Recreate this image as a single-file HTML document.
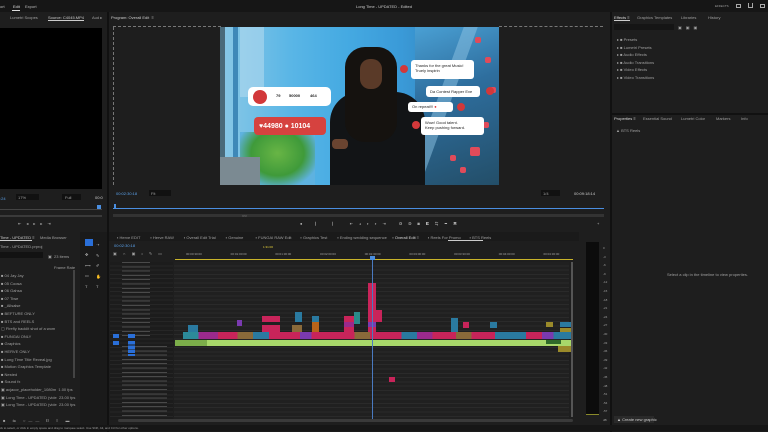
<!DOCTYPE html>
<html><head><meta charset="utf-8"><style>
*{margin:0;padding:0;box-sizing:border-box}
body{width:768px;height:431px;overflow:hidden;background:#1b1b1b;font-family:"Liberation Sans",sans-serif;font-size:4px;color:#9a9a9a;position:relative}
.a{position:absolute}
.t{position:absolute;white-space:nowrap;font-size:4px;color:#a0a0a0}
.card{position:absolute;background:#fff;border-radius:3px;color:#222;font-size:4px;line-height:5px;padding:1px 4px}
.dot{position:absolute;width:8px;height:8px;border-radius:50%;background:#d2383a}
.ic{position:absolute;width:6px;height:6px;background:#e04b5a;border-radius:2px}
</style></head><body>
<div class="a" style="left:0;top:0;width:768px;height:12px;background:#161616"></div>
<div class="t" style="left:0;top:4px;color:#bbb">ort</div>
<div class="t" style="left:13px;top:4px;color:#ddd">Edit</div>
<div class="t" style="left:25px;top:4px;color:#bbb">Export</div>
<div class="a" style="left:12px;top:10px;width:8px;height:1px;background:#ddd"></div>
<div class="t" style="left:356px;top:4px;color:#ccc">Long Time - UPDATED - Edited</div>
<div class="t" style="left:715px;top:4px;font-size:3px">EFFECTS</div>
<div class="a" style="left:736px;top:4px;width:5px;height:4px;border:1px solid #aaa"></div>
<div class="a" style="left:748px;top:3px;width:5px;height:5px;border:1px solid #aaa;border-top:none"></div>
<div class="a" style="left:760px;top:4px;width:5px;height:4px;border:1px solid #aaa"></div>

<div class="a" style="left:0;top:12px;width:107px;height:220px;background:#1e1e1e"></div>
<div class="t" style="left:10px;top:15px">Lumetri Scopes</div>
<div class="t" style="left:48px;top:15px;color:#ccc">Source: C4045.MP4</div>
<div class="a" style="left:48px;top:20px;width:36px;height:1px;background:#ccc"></div>
<div class="t" style="left:92px;top:15px">Aud ▸</div>
<div class="a" style="left:0;top:28px;width:102px;height:161px;background:#000"></div>
<div class="t" style="left:0;top:196px;color:#5aa0e8">:24</div>
<div class="a" style="left:16px;top:194px;width:23px;height:6px;background:#111"></div>
<div class="t" style="left:18px;top:195px">17%</div>
<div class="a" style="left:62px;top:194px;width:19px;height:6px;background:#111"></div>
<div class="t" style="left:65px;top:195px">Full</div>
<div class="t" style="left:95px;top:195px;color:#ccc">00:0</div>
<div class="a" style="left:0;top:209px;width:102px;height:1px;background:#444"></div>
<div class="a" style="left:97px;top:205px;width:4px;height:4px;background:#4a8ee0"></div>
<div class="a" style="left:0;top:215px;width:102px;height:2px;background:#3a3a3a"></div>
<div class="t" style="left:18px;top:221px;color:#bbb;letter-spacing:5px">⇤◂▸▸⇥</div>
<div class="a" style="left:107px;top:12px;width:2px;height:420px;background:#111"></div>

<div class="a" style="left:109px;top:12px;width:501px;height:220px;background:#1e1e1e"></div>
<div class="t" style="left:111px;top:15px;color:#ccc">Program: Overall Edit &nbsp;≡</div>
<div class="a" style="left:113px;top:22px;width:108px;height:5px;border-bottom:1px dashed #777"></div>
<div class="a" style="left:499px;top:22px;width:104px;height:5px;border-bottom:1px dashed #777"></div>
<div class="a" style="left:109px;top:27px;width:5px;height:158px;border-right:1px dashed #777"></div>

<div class="a" style="left:220px;top:27px;width:279px;height:158px;overflow:hidden;background:linear-gradient(90deg,#8ac8e6 0%,#5ab6e6 25%,#45aae2 45%,#3a9ad8 65%,#2d70a0 100%)">
  <div class="a" style="left:0;top:0;width:5px;height:158px;background:#4a6a7a"></div>
  <div class="a" style="left:13px;top:0;width:5px;height:158px;background:#3e88b8"></div>
  <div class="a" style="left:20px;top:0;width:24px;height:70px;background:#b0d8ee;opacity:.6"></div>
  <div class="a" style="left:20px;top:105px;width:75px;height:53px;background:radial-gradient(ellipse at 50% 40%,#68b545 0%,#3f9a3a 50%,#5eb2e0 80%)"></div>
  <div class="a" style="left:0;top:130px;width:40px;height:28px;background:#7b8a92"></div>
  <div class="a" style="left:195px;top:0;width:84px;height:158px;background:linear-gradient(160deg,#4aa0d4 0%,#2e6e9e 40%,#234e68 100%)"></div>
  <div class="a" style="left:215px;top:0;width:14px;height:158px;background:#8ec4e4;opacity:.5;transform:skewX(-20deg)"></div>
  <div class="a" style="left:110px;top:65px;width:95px;height:93px;background:#121416;border-radius:30px 30px 0 0"></div>
  <div class="a" style="left:125px;top:20px;width:52px;height:95px;background:#15120f;border-radius:20px"></div>
  <div class="a" style="left:140px;top:32px;width:22px;height:30px;background:#5a3a28;border-radius:10px"></div>
  <div class="a" style="left:112px;top:112px;width:16px;height:10px;background:#6a4430;border-radius:4px"></div>
  <div class="ic" style="left:250px;top:120px;width:10px;height:9px"></div>
  <div class="ic" style="left:263px;top:95px"></div>
  <div class="ic" style="left:240px;top:140px"></div>
  <div class="ic" style="left:265px;top:30px"></div>
  <div class="ic" style="left:230px;top:128px"></div>
  <div class="ic" style="left:255px;top:10px"></div>
  <div class="ic" style="left:270px;top:60px"></div>
  <div class="ic" style="left:244px;top:100px"></div>
</div>
<div class="a" style="left:248px;top:87px;width:83px;height:19px;background:#fff;border-radius:5px"></div>
<div class="dot" style="left:253px;top:90px;width:14px;height:14px"></div>
<div class="t" style="left:276px;top:93px;color:#222;font-weight:bold">79</div>
<div class="t" style="left:289px;top:93px;color:#222;font-weight:bold">50000</div>
<div class="t" style="left:310px;top:93px;color:#222;font-weight:bold">464</div>
<div class="a" style="left:254px;top:117px;width:72px;height:18px;background:#d6423f;border-radius:4px"></div>
<div class="t" style="left:259px;top:123px;color:#fff;font-weight:bold;font-size:7px">♥44980 ● 10104</div>
<div class="card" style="left:411px;top:60px;width:63px;height:19px;padding-top:3px">Thanks for the great Music!<br>Truely inspirin</div>
<div class="card" style="left:426px;top:86px;width:54px;height:11px;padding-top:3px">Da Contest Rapper Eve</div>
<div class="card" style="left:408px;top:102px;width:45px;height:10px;padding-top:2px">On repeat!!! <span style="color:#d33">●</span></div>
<div class="card" style="left:421px;top:117px;width:63px;height:18px;padding-top:3px">Wow! Good talent.<br>Keep pushing forward.</div>
<div class="dot" style="left:400px;top:65px"></div>
<div class="dot" style="left:486px;top:87px"></div>
<div class="dot" style="left:457px;top:103px"></div>
<div class="dot" style="left:412px;top:121px"></div>

<div class="t" style="left:116px;top:191px;color:#5aa0e8">00:02:30:18</div>
<div class="a" style="left:149px;top:190px;width:22px;height:6px;background:#111"></div>
<div class="t" style="left:151px;top:191px">Fit</div>
<div class="a" style="left:541px;top:190px;width:19px;height:6px;background:#111"></div>
<div class="t" style="left:543px;top:191px">1/4</div>
<div class="t" style="left:574px;top:191px;color:#ccc">00:09:18:14</div>
<div class="a" style="left:113px;top:208px;width:491px;height:1px;background:#4a8ee0"></div>
<div class="a" style="left:114px;top:204px;width:2px;height:4px;background:#4a8ee0"></div>
<div class="a" style="left:113px;top:214px;width:491px;height:3px;background:#333"></div>
<div class="t" style="left:242px;top:213px">○○</div>
<div class="t" style="left:300px;top:221px;color:#bbb;letter-spacing:6px">● ⎸ ⎸ ⇤◂▸▸⇥ ⚇⚇◙◧⇆▭▣</div>
<div class="t" style="left:597px;top:221px;color:#bbb">+</div>

<div class="a" style="left:610px;top:12px;width:2px;height:420px;background:#111"></div>
<div class="a" style="left:612px;top:12px;width:156px;height:101px;background:#1e1e1e"></div>
<div class="t" style="left:614px;top:15px;color:#ddd">Effects ≡</div>
<div class="a" style="left:614px;top:20px;width:16px;height:1px;background:#ccc"></div>
<div class="t" style="left:637px;top:15px">Graphics Templates</div>
<div class="t" style="left:681px;top:15px">Libraries</div>
<div class="t" style="left:708px;top:15px">History</div>
<div class="a" style="left:614px;top:24px;width:60px;height:6px;background:#151515"></div>
<div class="t" style="left:678px;top:25px;letter-spacing:4px">▣▣▣</div>
<div class="t" style="left:617px;top:36px;line-height:7.6px">▸ ■ Presets<br>▸ ■ Lumetri Presets<br>▸ ■ Audio Effects<br>▸ ■ Audio Transitions<br>▸ ■ Video Effects<br>▸ ■ Video Transitions</div>
<div class="a" style="left:612px;top:113px;width:156px;height:2px;background:#111"></div>
<div class="a" style="left:612px;top:115px;width:156px;height:310px;background:#1e1e1e"></div>
<div class="t" style="left:614px;top:116px;color:#ddd">Properties ≡</div>
<div class="t" style="left:643px;top:116px">Essential Sound</div>
<div class="t" style="left:681px;top:116px">Lumetri Color</div>
<div class="t" style="left:716px;top:116px">Markers</div>
<div class="t" style="left:741px;top:116px">Info</div>
<div class="t" style="left:616px;top:128px">▲ BTS Reels</div>
<div class="t" style="left:667px;top:272px">Select a clip in the timeline to view properties.</div>
<div class="a" style="left:614px;top:416px;width:40px;height:7px;background:#2a2a2a"></div>
<div class="t" style="left:617px;top:417px;color:#ccc">▲ Create new graphic</div>

<div class="a" style="left:0;top:232px;width:80px;height:193px;background:#1e1e1e"></div>
<div class="t" style="left:0;top:235px;color:#ccc">Time - UPDATED ≡</div>
<div class="a" style="left:0;top:240px;width:32px;height:1px;background:#ccc"></div>
<div class="t" style="left:40px;top:235px">Media Browser</div>
<div class="t" style="left:0;top:244px">Time - UPDATED.prproj</div>
<div class="a" style="left:0;top:252px;width:43px;height:6px;background:#121212"></div>
<div class="t" style="left:48px;top:254px">▣ &nbsp;23 items</div>
<div class="t" style="left:54px;top:265px">Frame Rate</div>
<div class="a" style="left:73px;top:270px;width:2px;height:108px;background:#444"></div>
<div class="t" style="left:1px;top:272px;line-height:7.6px">■ 04 Jay Jay<br>■ 05 Coosa<br>■ 06 Gahsa<br>■ 07 Tiwe<br>■ _Allsalse<br>■ BEFTURE ONLY<br>■ BTS and REELS<br>▢ Firefly backlit shot of a wom<br>■ FUNGAI ONLY<br>■ Graphics<br>■ HERVE ONLY<br>■ Long Time Title Reveal.jpg<br>■ Motion Graphics Template<br>■ Nested<br>■ Sound fx<br>▣ acjacor_placeholder_1080m &nbsp;1.00 fps<br>▣ Long Time - UPDATED (vide &nbsp;23.00 fps<br>▣ Long Time - UPDATED (vide &nbsp;23.00 fps</div>
<div class="t" style="left:3px;top:418px;letter-spacing:3px">■ ⇋ ○—— ⌷ ≡ ▬</div>

<div class="a" style="left:80px;top:232px;width:27px;height:193px;background:#1a1a1a"></div>
<div class="a" style="left:85px;top:239px;width:8px;height:7px;background:#2a6fd8"></div>
<div class="t" style="left:96px;top:240px;line-height:10.5px;color:#bbb">⇢<br>✎<br>✐<br>✋<br>T</div>
<div class="t" style="left:85px;top:250px;line-height:10.5px;color:#bbb">✥<br>⟷<br>▭<br>T</div>

<div class="a" style="left:109px;top:232px;width:470px;height:193px;background:#1e1e1e"></div>
<div class="a" style="left:109px;top:232px;width:470px;height:9px;background:#1a1a1a"></div>
<div class="t" style="left:117px;top:235px">▪ Herve EDIT &nbsp;&nbsp;&nbsp;&nbsp;&nbsp;&nbsp;&nbsp; ▪ Herve RAW &nbsp;&nbsp;&nbsp;&nbsp;&nbsp;&nbsp;&nbsp; ▪ Overall Edit Trial &nbsp;&nbsp;&nbsp;&nbsp;&nbsp;&nbsp;&nbsp; ▪ Genuine &nbsp;&nbsp;&nbsp;&nbsp;&nbsp;&nbsp;&nbsp;&nbsp;&nbsp; ▪ FUNGAI RAW Edit &nbsp;&nbsp;&nbsp;&nbsp;&nbsp;&nbsp; ▪ Graphics Test &nbsp;&nbsp;&nbsp;&nbsp;&nbsp;&nbsp;&nbsp; ▪ Ending wedding sequence &nbsp;&nbsp;&nbsp; ▪ <span style="color:#ddd">Overall Edit</span> ≡ &nbsp;&nbsp;&nbsp;&nbsp;&nbsp;&nbsp; ▪ Reels For Promo &nbsp;&nbsp;&nbsp;&nbsp;&nbsp;&nbsp; ▪ BTS Reels</div>
<div class="a" style="left:448px;top:240px;width:35px;height:1px;background:#ccc"></div>
<div class="t" style="left:114px;top:243px;color:#5aa0e8">00:02:30:18</div>
<div class="t" style="left:263px;top:245px;color:#e8d23a;font-size:3px">1:31:00</div>
<div class="t" style="left:113px;top:251px;letter-spacing:6px">▣∩▣•✎▭</div>
<div class="t" style="left:186px;top:252px;font-size:3px;word-spacing:28px">00:00:30:00 00:01:00:00 00:01:30:00 00:02:00:00 00:02:30:00 00:03:00:00 00:03:30:00 00:04:00:00 00:04:30:00 00:05:00:00</div>
<div class="a" style="left:175px;top:259px;width:398px;height:1px;background:#c8b32a"></div>
<div class="a" style="left:174px;top:262px;width:395px;height:158px;background:repeating-linear-gradient(180deg,#202020 0 3.3px,#2a2a2a 3.3px 4.3px)"></div>
<div class="a" style="left:110px;top:262px;width:63px;height:158px;background:repeating-linear-gradient(180deg,#1c1c1c 0 3.3px,#262626 3.3px 4.3px)"></div>
<div class="a" style="left:122px;top:262px;width:28px;height:75px;background:repeating-linear-gradient(180deg,#777 0 1px,transparent 1px 4.3px);opacity:.5"></div>
<div class="a" style="left:122px;top:346px;width:45px;height:74px;background:repeating-linear-gradient(180deg,#777 0 1px,transparent 1px 4.3px);opacity:.5"></div>
<div class="a" style="left:113px;top:334px;width:6px;height:4px;background:#2a6fd8"></div>
<div class="a" style="left:113px;top:341px;width:6px;height:4px;background:#2a6fd8"></div>
<div class="a" style="left:128px;top:334px;width:7px;height:4px;background:#2a6fd8"></div>
<div class="a" style="left:128px;top:341px;width:7px;height:15px;background:repeating-linear-gradient(180deg,#2a6fd8 0 3.5px,transparent 3.5px 4.3px)"></div>

<div class="a" style="left:183px;top:332px;width:390px;height:7px;background:linear-gradient(90deg,#2c8a9a 0 4%,#9b2a8c 4% 9%,#c8245a 9% 14%,#8a6a3a 14% 18%,#2a7aa0 18% 22%,#c8245a 22% 30%,#7a3ab0 30% 33%,#c8245a 33% 44%,#8a6a3a 44% 48%,#c8245a 48% 56%,#2a7aa0 56% 60%,#9b2a8c 60% 64%,#c8245a 64% 70%,#8a6a3a 70% 74%,#c8245a 74% 80%,#2a7aa0 80% 88%,#c8245a 88% 92%,#7a3ab0 92% 95%,#2a7aa0 95% 100%)"></div>
<div class="a" style="left:175px;top:340px;width:398px;height:6px;background:#a8d86a"></div>
<div class="a" style="left:175px;top:340px;width:32px;height:6px;background:#7cae4a"></div>
<div class="a" style="left:546px;top:340px;width:15px;height:4px;background:#2f6a2a"></div>
<div class="a" style="left:558px;top:346px;width:15px;height:6px;background:#9a8a2a"></div>
<div class="a" style="left:188px;top:325px;width:10px;height:7px;background:#2a7aa0"></div>
<div class="a" style="left:262px;top:316px;width:18px;height:6px;background:#c8245a"></div>
<div class="a" style="left:262px;top:325px;width:18px;height:7px;background:#c8245a"></div>
<div class="a" style="left:237px;top:320px;width:5px;height:6px;background:#7a3ab0"></div>
<div class="a" style="left:295px;top:312px;width:7px;height:10px;background:#2a7aa0"></div>
<div class="a" style="left:292px;top:325px;width:10px;height:7px;background:#8a6a3a"></div>
<div class="a" style="left:312px;top:316px;width:7px;height:6px;background:#2a7aa0"></div>
<div class="a" style="left:312px;top:322px;width:7px;height:10px;background:#b8641a"></div>
<div class="a" style="left:344px;top:316px;width:10px;height:16px;background:#c8245a"></div>
<div class="a" style="left:344px;top:322px;width:10px;height:5px;background:#9b2a8c"></div>
<div class="a" style="left:354px;top:312px;width:6px;height:12px;background:#2a8a8a"></div>
<div class="a" style="left:368px;top:283px;width:8px;height:49px;background:#c8245a"></div>
<div class="a" style="left:368px;top:322px;width:8px;height:5px;background:#7a3ab0"></div>
<div class="a" style="left:374px;top:310px;width:8px;height:12px;background:#c8245a"></div>
<div class="a" style="left:451px;top:318px;width:7px;height:14px;background:#2a7aa0"></div>
<div class="a" style="left:463px;top:322px;width:6px;height:6px;background:#c8245a"></div>
<div class="a" style="left:490px;top:322px;width:7px;height:6px;background:#2a7aa0"></div>
<div class="a" style="left:546px;top:322px;width:7px;height:5px;background:#9a8a2a"></div>
<div class="a" style="left:560px;top:322px;width:12px;height:5px;background:#2a7aa0"></div>
<div class="a" style="left:560px;top:328px;width:12px;height:4px;background:#9a8a2a"></div>
<div class="a" style="left:389px;top:377px;width:6px;height:5px;background:#c8245a"></div>
<div class="a" style="left:372px;top:258px;width:1px;height:162px;background:#4a7ac0"></div>
<div class="a" style="left:370px;top:256px;width:5px;height:4px;background:#4a8ee0"></div>
<div class="a" style="left:571px;top:262px;width:2px;height:155px;background:#555"></div>
<div class="a" style="left:118px;top:419px;width:455px;height:3px;background:#3a3a3a;border-radius:2px"></div>

<div class="a" style="left:579px;top:232px;width:31px;height:193px;background:#1e1e1e"></div>
<div class="a" style="left:586px;top:242px;width:13px;height:173px;background:#0c0c0c"></div>
<div class="a" style="left:586px;top:414px;width:13px;height:1px;background:#8a8a2a"></div>
<div class="t" style="left:603px;top:244px;font-size:3px;line-height:8.6px">0<br>-3<br>-6<br>-9<br>-12<br>-15<br>-18<br>-21<br>-24<br>-27<br>-30<br>-33<br>-36<br>-39<br>-42<br>-45<br>-48<br>-51<br>-54<br>-57<br>dB</div>

<div class="a" style="left:0;top:425px;width:768px;height:6px;background:#161616"></div>
<div class="t" style="left:0;top:426px;font-size:3px">ck to select, or click in empty space and drag to marquee select. Use Shift, Alt, and Ctrl for other options.</div>
</body></html>
